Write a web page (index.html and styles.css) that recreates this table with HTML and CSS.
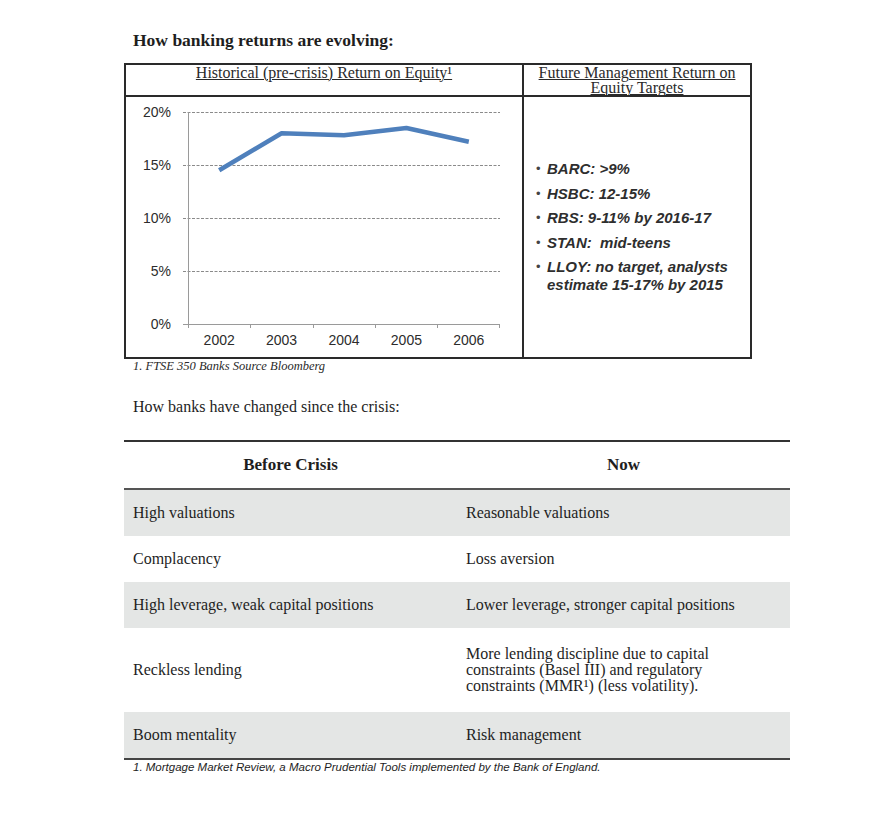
FILE: index.html
```html
<!DOCTYPE html>
<html lang="en">
<head>
<meta charset="utf-8">
<title>Bank returns</title>
<link rel="stylesheet" href="styles.css">
</head>
<body>
<div class="page">
  <h1 class="title">How banking returns are evolving:</h1>

  <div class="roe">
    <div class="hcell hleft"><span class="u">Historical (pre-crisis) Return on Equity¹</span></div>
    <div class="hcell"><span class="u">Future Management Return on Equity Targets</span></div>
    <div class="chart-cell">
      <svg class="chart" width="396" height="260" viewBox="0 0 396 260">
        <line class="gl" x1="57" y1="15.5" x2="374" y2="15.5"/>
        <line class="gl" x1="57" y1="68.5" x2="374" y2="68.5"/>
        <line class="gl" x1="57" y1="121.5" x2="374" y2="121.5"/>
        <line class="gl" x1="57" y1="174.5" x2="374" y2="174.5"/>
        <line class="ax" x1="57" y1="227.5" x2="374" y2="227.5"/>
        <line class="ax" x1="62.5" y1="15" x2="62.5" y2="228"/>
        <line class="ax" x1="62.5" y1="227" x2="62.5" y2="231"/>
        <line class="ax" x1="124.5" y1="227" x2="124.5" y2="231"/>
        <line class="ax" x1="187.5" y1="227" x2="187.5" y2="231"/>
        <line class="ax" x1="249.5" y1="227" x2="249.5" y2="231"/>
        <line class="ax" x1="311.5" y1="227" x2="311.5" y2="231"/>
        <line class="ax" x1="373.5" y1="227" x2="373.5" y2="231"/>
        <polyline class="series" points="93.2,73.3 155.6,36.2 218,38.3 280.4,31 342.8,44.7"/>
        <text class="yl" x="45" y="20">20%</text>
        <text class="yl" x="45" y="73">15%</text>
        <text class="yl" x="45" y="126">10%</text>
        <text class="yl" x="45" y="179">5%</text>
        <text class="yl" x="45" y="232">0%</text>
        <text class="xl" x="93.2" y="248">2002</text>
        <text class="xl" x="155.6" y="248">2003</text>
        <text class="xl" x="218" y="248">2004</text>
        <text class="xl" x="280.4" y="248">2005</text>
        <text class="xl" x="342.8" y="248">2006</text>
      </svg>
    </div>
    <div class="targets-cell">
      <ul class="targets">
        <li><span class="dot">•</span><span>BARC: &gt;9%</span></li>
        <li><span class="dot">•</span><span>HSBC: 12-15%</span></li>
        <li><span class="dot">•</span><span>RBS: 9-11% by 2016-17</span></li>
        <li><span class="dot">•</span><span>STAN:&nbsp; mid-teens</span></li>
        <li><span class="dot">•</span><span>LLOY: no target, analysts estimate 15-17% by 2015</span></li>
      </ul>
    </div>
  </div>
  <p class="note">1. FTSE 350 Banks Source Bloomberg</p>

  <h2 class="subtitle">How banks have changed since the crisis:</h2>

  <div class="changes">
    <div class="crow head"><div>Before Crisis</div><div>Now</div></div>
    <div class="crow gray"><div>High valuations</div><div>Reasonable valuations</div></div>
    <div class="crow"><div>Complacency</div><div>Loss aversion</div></div>
    <div class="crow gray"><div>High leverage, weak capital positions</div><div>Lower leverage, stronger capital positions</div></div>
    <div class="crow tall"><div>Reckless lending</div><div>More lending discipline due to capital<br>constraints (Basel III) and regulatory<br>constraints (MMR¹) (less volatility).</div></div>
    <div class="crow gray"><div>Boom mentality</div><div>Risk management</div></div>
  </div>
  <p class="note2">1. Mortgage Market Review, a Macro Prudential Tools implemented by the Bank of England.</p>
</div>
</body>
</html>
```

FILE: styles.css
```css
html, body {
  margin: 0;
  background: #ffffff;
}

body {
  color: #1e1e1e;
  font-family: "Liberation Serif", "Times New Roman", serif;
}

.page {
  padding: 30px 0 0 124px;
}

.title {
  margin: 0 0 13px 9px;
  font-size: 17.5px;
  line-height: 20px;
  font-weight: bold;
}

/* top table */
.roe {
  width: 628px;
  box-sizing: border-box;
  border: 2px solid #2a2a2a;
  display: grid;
  grid-template-columns: 398px 226px;
}

.hcell {
  height: 32px;
  box-sizing: border-box;
  padding: 0 10px;
  border-bottom: 2px solid #2a2a2a;
  text-align: center;
  font-size: 16px;
  line-height: 15px;
  color: #2a2a2a;
}

.hleft,
.chart-cell {
  border-right: 2px solid #2a2a2a;
}

.u {
  text-decoration: underline;
  text-decoration-thickness: 1px;
  text-underline-offset: 1px;
}

.chart-cell {
  height: 260px;
}

.chart {
  display: block;
}

.chart .gl {
  stroke: #8a8a8a;
  stroke-width: 1;
  stroke-dasharray: 3 1.5;
}

.chart .ax {
  stroke: #9a9a9a;
  stroke-width: 1;
}

.chart .series {
  fill: none;
  stroke: #4f80bc;
  stroke-width: 4.5;
  stroke-linejoin: round;
}

.chart text {
  font-family: "Liberation Sans", Arial, sans-serif;
  font-size: 14px;
  fill: #2c2c2c;
}

.chart .yl {
  text-anchor: end;
}

.chart .xl {
  text-anchor: middle;
}

.targets-cell {
  display: flex;
  align-items: center;
  padding-left: 12px;
}

.targets {
  list-style: none;
  margin: 0;
  padding: 0;
  display: flex;
  flex-direction: column;
  gap: 6.5px;
  font-family: "Liberation Sans", Arial, sans-serif;
  font-style: italic;
  font-weight: bold;
  font-size: 15px;
  line-height: 18px;
  color: #2e2e2e;
}

.targets li {
  display: flex;
}

.dot {
  flex: none;
  width: 11px;
  font-style: normal;
  font-weight: normal;
  font-size: 13px;
  color: #444;
}

.note {
  margin: 0;
  padding-left: 9px;
  font-style: italic;
  font-size: 12.5px;
  line-height: 14px;
  color: #2a2a2a;
}

.subtitle {
  margin: 24px 0 0 9px;
  font-size: 16px;
  line-height: 20px;
  font-weight: normal;
}

/* bottom table */
.changes {
  width: 666px;
  margin-top: 23px;
  border-top: 2px solid #333;
  border-bottom: 2px solid #444;
}

.crow {
  display: grid;
  grid-template-columns: 333px 333px;
  align-items: center;
}

.crow > div {
  padding: 15px 9px;
  font-size: 16px;
  line-height: 16px;
}

.crow.head {
  border-bottom: 2px solid #555;
}

.crow.head > div {
  text-align: center;
  font-weight: bold;
  font-size: 17px;
}

.crow.gray {
  background: #e4e6e5;
}

.crow.tall > div {
  padding: 18px 9px;
}

.note2 {
  margin: 0;
  padding-left: 9px;
  font-family: "Liberation Sans", Arial, sans-serif;
  font-style: italic;
  font-size: 11.5px;
  line-height: 14px;
  color: #1e1e1e;
}
```
